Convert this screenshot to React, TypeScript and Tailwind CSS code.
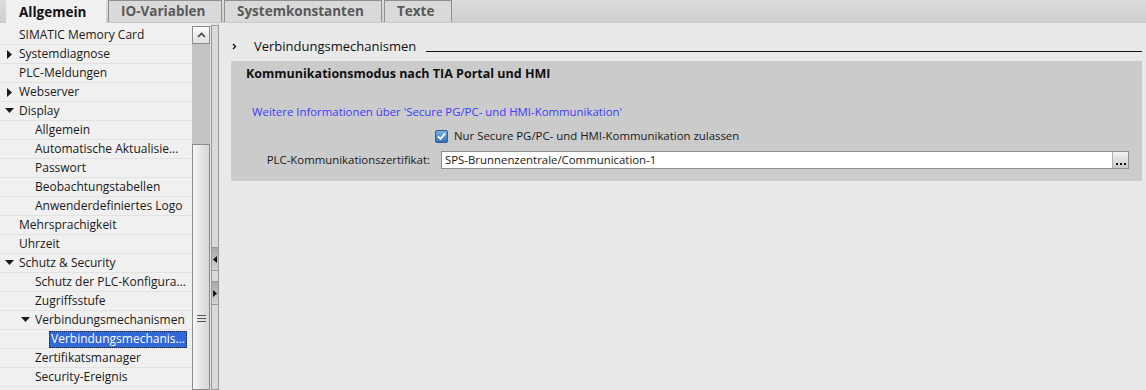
import React from 'react';

type TreeItem = {
    label: string;
    level: number;
    toggle?: 'open' | 'closed';
    selected?: boolean;
};

const tree: TreeItem[] = [
    { label: 'SIMATIC Memory Card', level: 0 },
    { label: 'Systemdiagnose', level: 0, toggle: 'closed' },
    { label: 'PLC-Meldungen', level: 0 },
    { label: 'Webserver', level: 0, toggle: 'closed' },
    { label: 'Display', level: 0, toggle: 'open' },
    { label: 'Allgemein', level: 1 },
    { label: 'Automatische Aktualisie...', level: 1 },
    { label: 'Passwort', level: 1 },
    { label: 'Beobachtungstabellen', level: 1 },
    { label: 'Anwenderdefiniertes Logo', level: 1 },
    { label: 'Mehrsprachigkeit', level: 0 },
    { label: 'Uhrzeit', level: 0 },
    { label: 'Schutz & Security', level: 0, toggle: 'open' },
    { label: 'Schutz der PLC-Konfigura...', level: 1 },
    { label: 'Zugriffsstufe', level: 1 },
    { label: 'Verbindungsmechanismen', level: 1, toggle: 'open' },
    { label: 'Verbindungsmechanis...', level: 2, selected: true },
    { label: 'Zertifikatsmanager', level: 1 },
    { label: 'Security-Ereignis', level: 1 },
];

const tabs = [
    { label: 'Allgemein', active: true, w: 'w-[100px]' },
    { label: 'IO-Variablen', w: 'w-[114px]' },
    { label: 'Systemkonstanten', w: 'w-[158px]' },
    { label: 'Texte', w: 'w-[68px]' },
];

const Toggle = ({ state }: { state: 'open' | 'closed' }) =>
    state === 'open' ? (
        <svg width="9" height="6" viewBox="0 0 9 6" className="shrink-0">
            <path d="M0 0h9L4.5 5z" fill="#1a1a1a" />
        </svg>
    ) : (
        <svg width="5" height="9" viewBox="0 0 5 9" className="shrink-0">
            <path d="M0 0v9l5-4.5z" fill="#1a1a1a" />
        </svg>
    );

const TreeRow = ({ item }: { item: TreeItem }) => {
    const indent = item.level === 0 ? 'pl-[19px]' : item.level === 1 ? 'pl-[35px]' : 'pl-[49px]';
    return (
        <div className={`relative h-[19px] flex items-center border-b border-[#e2e2e2] ${indent}`}>
            {item.toggle && (
                <span className={`absolute top-0 bottom-0 flex items-center ${item.level === 0 ? (item.toggle === 'open' ? 'left-[5px]' : 'left-[7px]') : 'left-[21px]'}`}>
                    <Toggle state={item.toggle} />
                </span>
            )}
            {item.selected ? (
                <span className="h-[17px] px-[2px] flex items-center whitespace-nowrap bg-[#3369d6] text-white outline outline-1 outline-dotted outline-[#10204a] -outline-offset-1">
                    {item.label}
                </span>
            ) : (
                <span className="text-[#1a1a1a] whitespace-nowrap">{item.label}</span>
            )}
        </div>
    );
};

export default function App() {
    return (
        <div className="w-[1146px] h-[390px] flex flex-col overflow-hidden bg-[#e8e8e8] font-['Open_Sans','Noto_Sans',sans-serif]">
            {/* Tabs */}
            <div className="h-[23px] shrink-0 flex items-end gap-[2px] pl-[6px] bg-gradient-to-b from-[#dcdcdc] to-[#cfcfcf] border-b border-[#c9c9c9]">
                {tabs.map((t) => (
                    <div
                        key={t.label}
                        className={`${t.w} h-[22px] flex items-center pl-[12px] text-[13.5px] font-bold border border-b-0 ${t.active ? 'bg-[#f0f0f0] text-[#111] border-[#f0f0f0] h-[23px] -mb-px' : 'bg-[#d9d9d9] text-[#595959] border-[#8f8f8f]'}`}
                    >
                        {t.label}
                    </div>
                ))}
            </div>

            <div className="flex-1 flex min-h-0">
                {/* Tree */}
                <div className="w-[192px] shrink-0 bg-[#f0f0f0] pt-[3px] text-[12px] overflow-hidden">
                    {tree.map((item) => (
                        <TreeRow key={item.label + item.level} item={item} />
                    ))}
                </div>

                {/* Vertical scrollbar */}
                <div className="w-[18px] shrink-0 flex flex-col bg-[#f0f0f0] pt-[3px]">
                    <div className="h-[18px] border border-[#8c8c8c] bg-gradient-to-b from-[#fafafa] to-[#e0e0e0] flex items-center justify-center">
                        <svg width="9" height="6" viewBox="0 0 9 6">
                            <path d="M1 5l3.5-3.5L8 5" fill="none" stroke="#444" strokeWidth="1.6" />
                        </svg>
                    </div>
                    <div className="h-[100px] bg-[#c3c3c3]" />
                    <div className="flex-1 border border-[#8c8c8c] bg-gradient-to-r from-[#f6f6f6] to-[#d6d6d6] flex flex-col items-center pt-[170px] gap-[2px]">
                        <div className="w-[9px] h-px bg-[#555]" />
                        <div className="w-[9px] h-px bg-[#555]" />
                        <div className="w-[9px] h-px bg-[#555]" />
                    </div>
                </div>

                {/* Splitter */}
                <div className="w-[9px] shrink-0 bg-[#e2e2e2] pl-px pt-[2px]">
                    <div className="w-[8px] h-full border border-[#9a9a9a] bg-[#dadada] flex flex-col pt-[221px]">
                        <div className="h-[24px] border-y border-[#9a9a9a] bg-gradient-to-b from-[#a9a9a9] to-[#d4d4d4] flex items-center justify-center">
                            <svg width="4" height="7" viewBox="0 0 4 7">
                                <path d="M4 0v7L0 3.5z" fill="#111" />
                            </svg>
                        </div>
                        <div className="h-[10px]" />
                        <div className="h-[24px] border-y border-[#9a9a9a] bg-gradient-to-b from-[#a9a9a9] to-[#d4d4d4] flex items-center justify-center">
                            <svg width="4" height="7" viewBox="0 0 4 7">
                                <path d="M0 0v7l4-3.5z" fill="#111" />
                            </svg>
                        </div>
                    </div>
                </div>

                {/* Content */}
                <div className="flex-1 bg-[#e9e9e9] pl-[12px] pr-[4px] pt-[14px]">
                    <div className="h-[19px] flex items-center">
                        <svg width="5" height="7" viewBox="0 0 5 7" className="ml-[1px] shrink-0">
                            <path d="M1 1l2.5 2.5L1 6" fill="none" stroke="#111" strokeWidth="1.4" />
                        </svg>
                        <span className="ml-[17px] text-[13px] text-[#111]">Verbindungsmechanismen</span>
                        <div className="flex-1 ml-[10px] mt-[10px] h-px bg-[#111]" />
                    </div>

                    <div className="mt-[5px] h-[120px] bg-[#cbcbcb] pl-[15px] pr-[13px] pt-[4px] text-[11.4px] text-[#1a1a1a]">
                        <div className="text-[12.5px] font-bold text-[#111] leading-[18px]">
                            Kommunikationsmodus nach TIA Portal und HMI
                        </div>
                        <div className="mt-[21px] pl-[6px] leading-[16px] text-[#3b3bff]">
                            Weitere Informationen über 'Secure PG/PC- und HMI-Kommunikation'
                        </div>
                        <div className="mt-[8px] flex items-center h-[16px] pl-[189px]">
                            <svg width="13" height="13" viewBox="0 0 13 13" className="shrink-0">
                                <defs>
                                    <linearGradient id="cb" x1="0" y1="0" x2="0" y2="1">
                                        <stop offset="0" stopColor="#7db3e6" />
                                        <stop offset="1" stopColor="#2f6fb8" />
                                    </linearGradient>
                                </defs>
                                <rect x="0.5" y="0.5" width="12" height="12" rx="1.5" fill="url(#cb)" stroke="#2c5d94" />
                                <path d="M3 6.5l2.5 2.5L10 3.5" fill="none" stroke="#fff" strokeWidth="1.8" />
                            </svg>
                            <span className="ml-[6px]">Nur Secure PG/PC- und HMI-Kommunikation zulassen</span>
                        </div>
                        <div className="mt-[7px] flex items-center">
                            <span className="w-[195px] text-right pr-[11px] shrink-0">PLC-Kommunikationszertifikat:</span>
                            <div className="flex-1 h-[18px] flex bg-white border border-[#8e8e8e]">
                                <span className="flex-1 pl-[3px] leading-[16px]">SPS-Brunnenzentrale/Communication-1</span>
                                <div className="w-[16px] bg-gradient-to-b from-[#f4f4f4] to-[#c9c9c9] border-l border-[#b0b0b0] flex items-end justify-center gap-[2px] pb-[3px]">
                                    <div className="w-[2px] h-[2px] bg-[#111]" />
                                    <div className="w-[2px] h-[2px] bg-[#111]" />
                                    <div className="w-[2px] h-[2px] bg-[#111]" />
                                </div>
                            </div>
                        </div>
                    </div>
                </div>
            </div>
        </div>
    );
}
